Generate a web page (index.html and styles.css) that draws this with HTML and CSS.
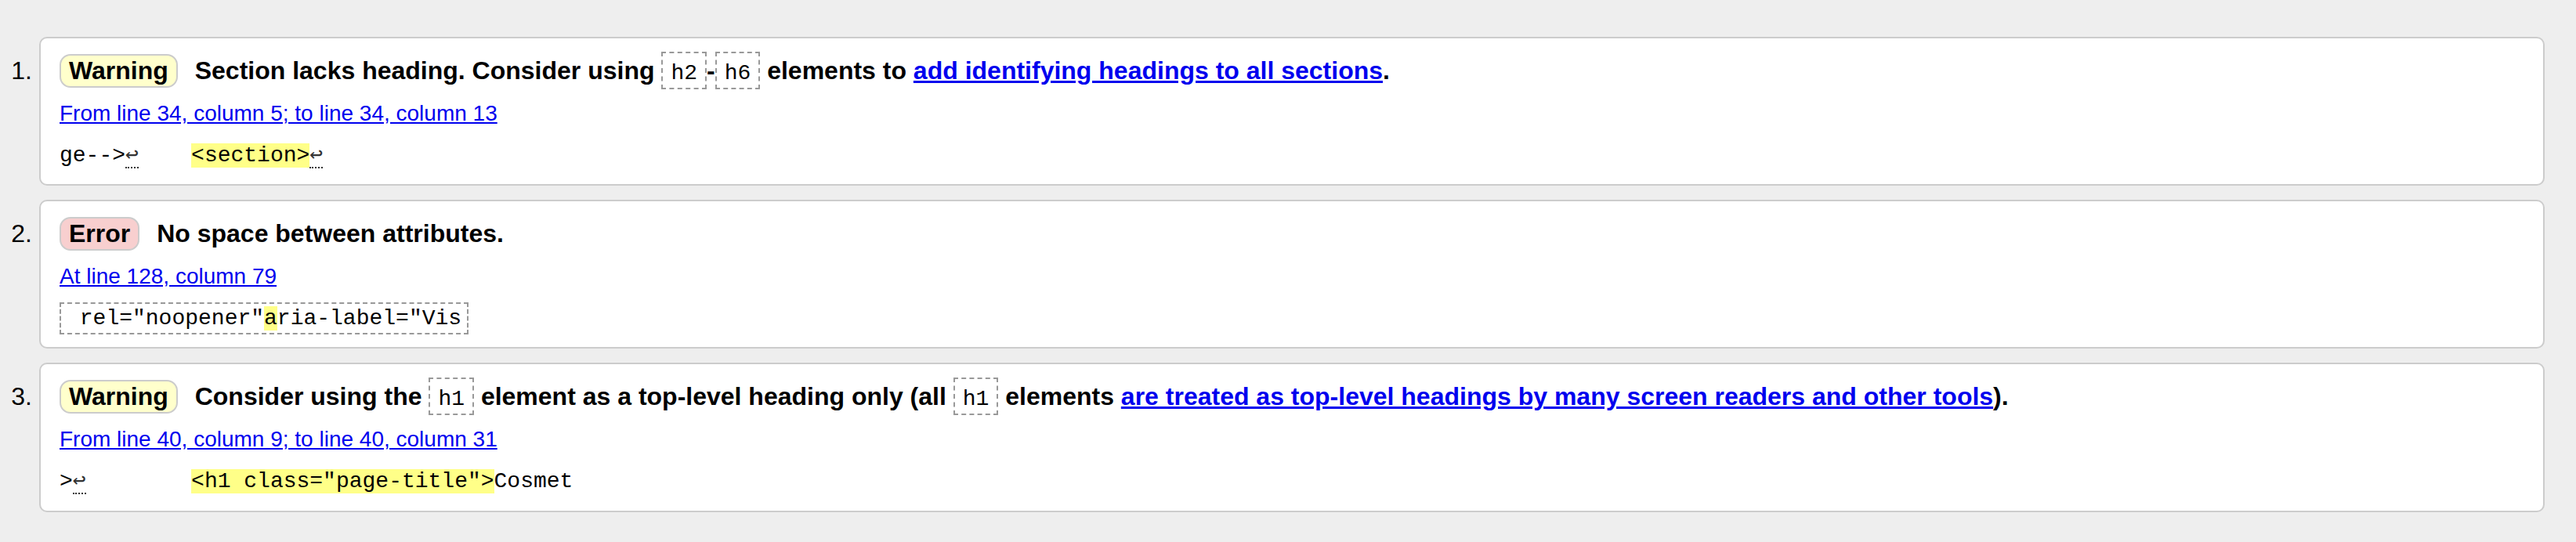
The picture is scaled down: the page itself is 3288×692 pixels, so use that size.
FILE: index.html
```html
<!DOCTYPE html>
<html lang="en">
<head>
<meta charset="utf-8">
<title>Validation messages</title>
<link rel="stylesheet" href="styles.css">
</head>
<body>
<ol class="messages">
  <li class="msg">
    <span class="num">1.</span>
    <div class="card">
      <p class="summary"><strong class="badge badge-warning">Warning</strong> <span>Section lacks heading. Consider using <code class="tag">h2</code>-<code class="tag">h6</code> elements to <a href="#">add identifying headings to all sections</a>.</span></p>
      <p class="location"><a href="#">From line 34, column 5; to line 34, column 13</a></p>
      <p class="extract"><code class="src">ge--&gt;<span class="lf">↩</span>    <b class="hl">&lt;section&gt;</b><span class="lf">↩</span></code></p>
    </div>
  </li>
  <li class="msg">
    <span class="num">2.</span>
    <div class="card">
      <p class="summary"><strong class="badge badge-error">Error</strong> <span>No space between attributes.</span></p>
      <p class="location"><a href="#">At line 128, column 79</a></p>
      <p class="extract"><code class="src boxed"> rel="noopener"<b class="hl">a</b>ria-label="Vis</code></p>
    </div>
  </li>
  <li class="msg">
    <span class="num">3.</span>
    <div class="card">
      <p class="summary"><strong class="badge badge-warning">Warning</strong> <span>Consider using the <code class="tag">h1</code> element as a top-level heading only (all <code class="tag">h1</code> elements <a href="#">are treated as top-level headings by many screen readers and other tools</a>).</span></p>
      <p class="location"><a href="#">From line 40, column 9; to line 40, column 31</a></p>
      <p class="extract"><code class="src">&gt;<span class="lf">↩</span>        <b class="hl">&lt;h1 class="page-title"&gt;</b>Cosmet</code></p>
    </div>
  </li>
</ol>
</body>
</html>
```
FILE: styles.css
```css
html, body {
  margin: 0;
  padding: 0;
  background: #eeeeee;
}

body {
  font-family: "Liberation Sans", Arial, Helvetica, sans-serif;
  color: #000;
}

.messages {
  list-style: none;
  margin: 47px 40px 0 0;
  padding: 0;
  display: flex;
  flex-direction: column;
  gap: 18px;
}

.msg {
  display: flex;
  align-items: baseline;
}

.num {
  flex: 0 0 50px;
  box-sizing: border-box;
  text-align: right;
  padding-right: 9px;
  font-size: 32px;
  line-height: 1.2;
}

.card {
  flex: 1;
  background: #fff;
  border: 2px solid #cccccc;
  border-radius: 10px;
  padding: 20px 24px 20px;
}

.card p {
  margin: 0;
}

.summary {
  font-size: 32px;
  font-weight: bold;
  line-height: 1.2;
}

.badge {
  display: inline-block;
  line-height: 35px;
  padding: 2px 10px;
  border: 2px solid #cccccc;
  border-radius: 14px;
  margin-right: 13px;
  font-weight: bold;
}

.badge-warning {
  background: #ffffcc;
}

.badge-error {
  background: #f8cfcf;
}

.tag {
  font-family: "Liberation Mono", "Courier New", monospace;
  font-size: 28px;
  font-weight: normal;
  padding: 10px 10px 3px;
  border: 2px dashed #999999;
}

a {
  color: #0000ee;
  text-decoration: underline;
}

.location {
  margin-top: 16px !important;
  font-size: 28px;
  line-height: 1.2;
}

.extract {
  margin-top: 18px !important;
  font-size: 28px;
  line-height: 1.2;
}

.src {
  font-family: "Liberation Mono", "DejaVu Sans Mono", "Courier New", monospace;
  font-size: 28px;
  white-space: pre;
  color: #000;
}

.boxed {
  border: 2px dashed #999999;
  padding: 3px 7px;
}

.hl {
  font-weight: normal;
  background: #ffff88;
}

.lf {
  font-family: "DejaVu Sans Mono", monospace;
  line-height: 1;
  color: #333;
  border-bottom: 2px dotted #333;
}
```
